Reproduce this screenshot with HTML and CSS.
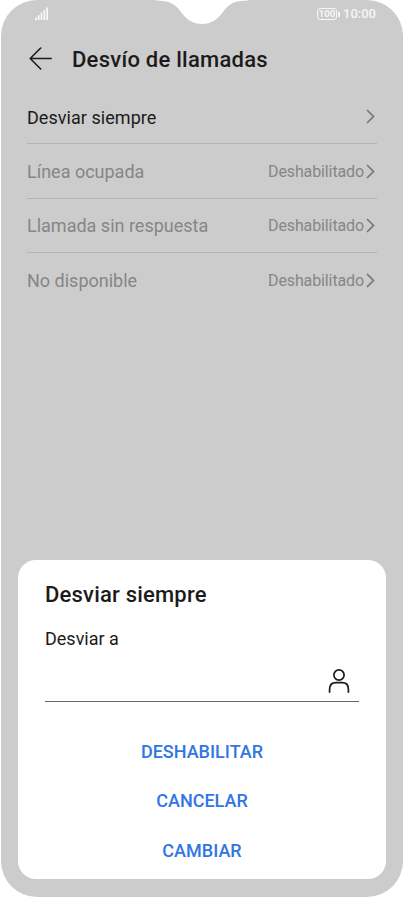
FILE: index.html
```html
<!DOCTYPE html>
<html lang="es">
<head>
<meta charset="utf-8">
<title>Desvío de llamadas</title>
<link rel="stylesheet" href="styles.css">
</head>
<body>
<main class="phone">
  <svg class="notch" width="92" height="25" viewBox="0 0 92 25" aria-hidden="true"><path d="M0 0V.6C14 .6 19 4 25.500 12.500C31 20 37 24 46 24S61 20 66.500 12.500C73 4 78 .6 92 .6V0Z" fill="#fff"/></svg>
  <div class="status">
    <svg width="14" height="14" viewBox="0 0 14 14" fill="#f6f6f6" aria-hidden="true"><path d="M0 10.500h1.800v2.500H0zM2.800 8h1.800v5H2.800zM5.600 5.500h1.800V13H5.600zM8.400 3h1.800v10H8.400zM11.200 .5h1.800V13h-1.800z"/></svg>
    <div class="status-right">
      <span class="battery">100</span>
      <span class="clock">10:00</span>
    </div>
  </div>
  <header class="bar">
    <svg width="24" height="24" viewBox="0 0 24 24" fill="none" stroke="#1b1b1b" stroke-width="1.600" stroke-linecap="round" stroke-linejoin="round" aria-hidden="true"><path d="M11.700 1L1.200 11.500L11.700 22M1.200 11.500H22.200"/></svg>
    <h1>Desvío de llamadas</h1>
  </header>
  <section class="list">
    <div class="row active"><span class="label">Desviar siempre</span><svg class="chev" viewBox="0 0 9 15"><path d="M1 1L7.500 7.500L1 14"/></svg></div>
    <div class="row"><span class="label">Línea ocupada</span><span class="value">Deshabilitado</span><svg class="chev" viewBox="0 0 9 15"><path d="M1 1L7.500 7.500L1 14"/></svg></div>
    <div class="row"><span class="label">Llamada sin respuesta</span><span class="value">Deshabilitado</span><svg class="chev" viewBox="0 0 9 15"><path d="M1 1L7.500 7.500L1 14"/></svg></div>
    <div class="row"><span class="label">No disponible</span><span class="value">Deshabilitado</span><svg class="chev" viewBox="0 0 9 15"><path d="M1 1L7.500 7.500L1 14"/></svg></div>
  </section>
  <section class="dialog">
    <h2>Desviar siempre</h2>
    <p>Desviar a</p>
    <div class="field">
      <svg width="22" height="25" viewBox="0 0 22 25" fill="none" stroke="#1b1b1b" stroke-width="1.700" aria-hidden="true"><circle cx="11" cy="6" r="5.100"/><path d="M1.600 23.800V20.200Q1.600 13.600 8 13.600H14Q20.400 13.600 20.400 20.200V23.800"/></svg>
    </div>
    <div class="actions">
      <span>DESHABILITAR</span>
      <span>CANCELAR</span>
      <span>CAMBIAR</span>
    </div>
  </section>
</main>
</body>
</html>
```

FILE: styles.css
```css
* { box-sizing: border-box; }
body { margin: 0; background: #fff; font-family: Roboto, sans-serif; color: #1b1b1b; }
.phone {
  position: relative;
  display: flex;
  flex-direction: column;
  width: 402px;
  height: 897px;
  margin: 0 1px;
  background: #ccc;
  border-radius: 36px;
  overflow: hidden;
}
.notch { position: absolute; left: 155px; top: 0; }
.status {
  display: flex;
  justify-content: space-between;
  height: 40px;
  padding: 7px 27px 0 34px;
  color: #f6f6f6;
}
.status-right { display: flex; gap: 6px; height: 14px; align-items: center; }
.battery {
  position: relative;
  width: 20px;
  height: 12px;
  border: 1px solid #f6f6f6;
  border-radius: 3px;
  font-size: 9.500px;
  font-weight: 700;
  line-height: 10px;
  text-align: center;
}
.battery::after { content: ""; position: absolute; right: -3.500px; top: 3px; width: 1.500px; height: 5px; background: #f6f6f6; }
.clock { font-size: 13px; font-weight: 500; line-height: 14px; }
.bar { display: flex; align-items: center; gap: 19px; height: 37px; padding-left: 28px; }
h1, h2, p { margin: 0; }
h1 { padding-top: 2px; font-size: 22px; font-weight: 500; line-height: 30px; letter-spacing: .25px; }
.list { margin: 13px 26px 0; }
.row { display: flex; align-items: center; height: 54.500px; border-bottom: 1px solid #b3b3b3; color: #868686; }
.row:first-child { height: 54px; }
.row:nth-child(2) { padding-top: 1px; }
.row:last-child { height: 54px; border-bottom: 0; }
.active .label { padding-top: 1px; color: #1b1b1b; letter-spacing: .05px; }
.label { flex: 1; font-size: 18px; }
.value { font-size: 16px; letter-spacing: -.12px; }
.chev { width: 9px; height: 15px; margin: 0 2px; fill: none; stroke: #777; stroke-width: 1.700; }
.dialog {
  height: 319px;
  margin: auto 17px 18px;
  padding: 20px 27px 0;
  background: #fff;
  border-radius: 18px;
}
h2 { font-size: 22px; font-weight: 500; line-height: 30px; letter-spacing: .2px; }
p { margin: 17px 0 1px; font-size: 18px; line-height: 24px; }
.field { display: flex; justify-content: flex-end; height: 50px; padding: 17px 9px 0 0; border-bottom: 1px solid #666; }
.actions { display: flex; flex-direction: column; align-items: center; padding-top: 25px; color: #3275e4; font-size: 18px; font-weight: 500; line-height: 49.300px; }
```
